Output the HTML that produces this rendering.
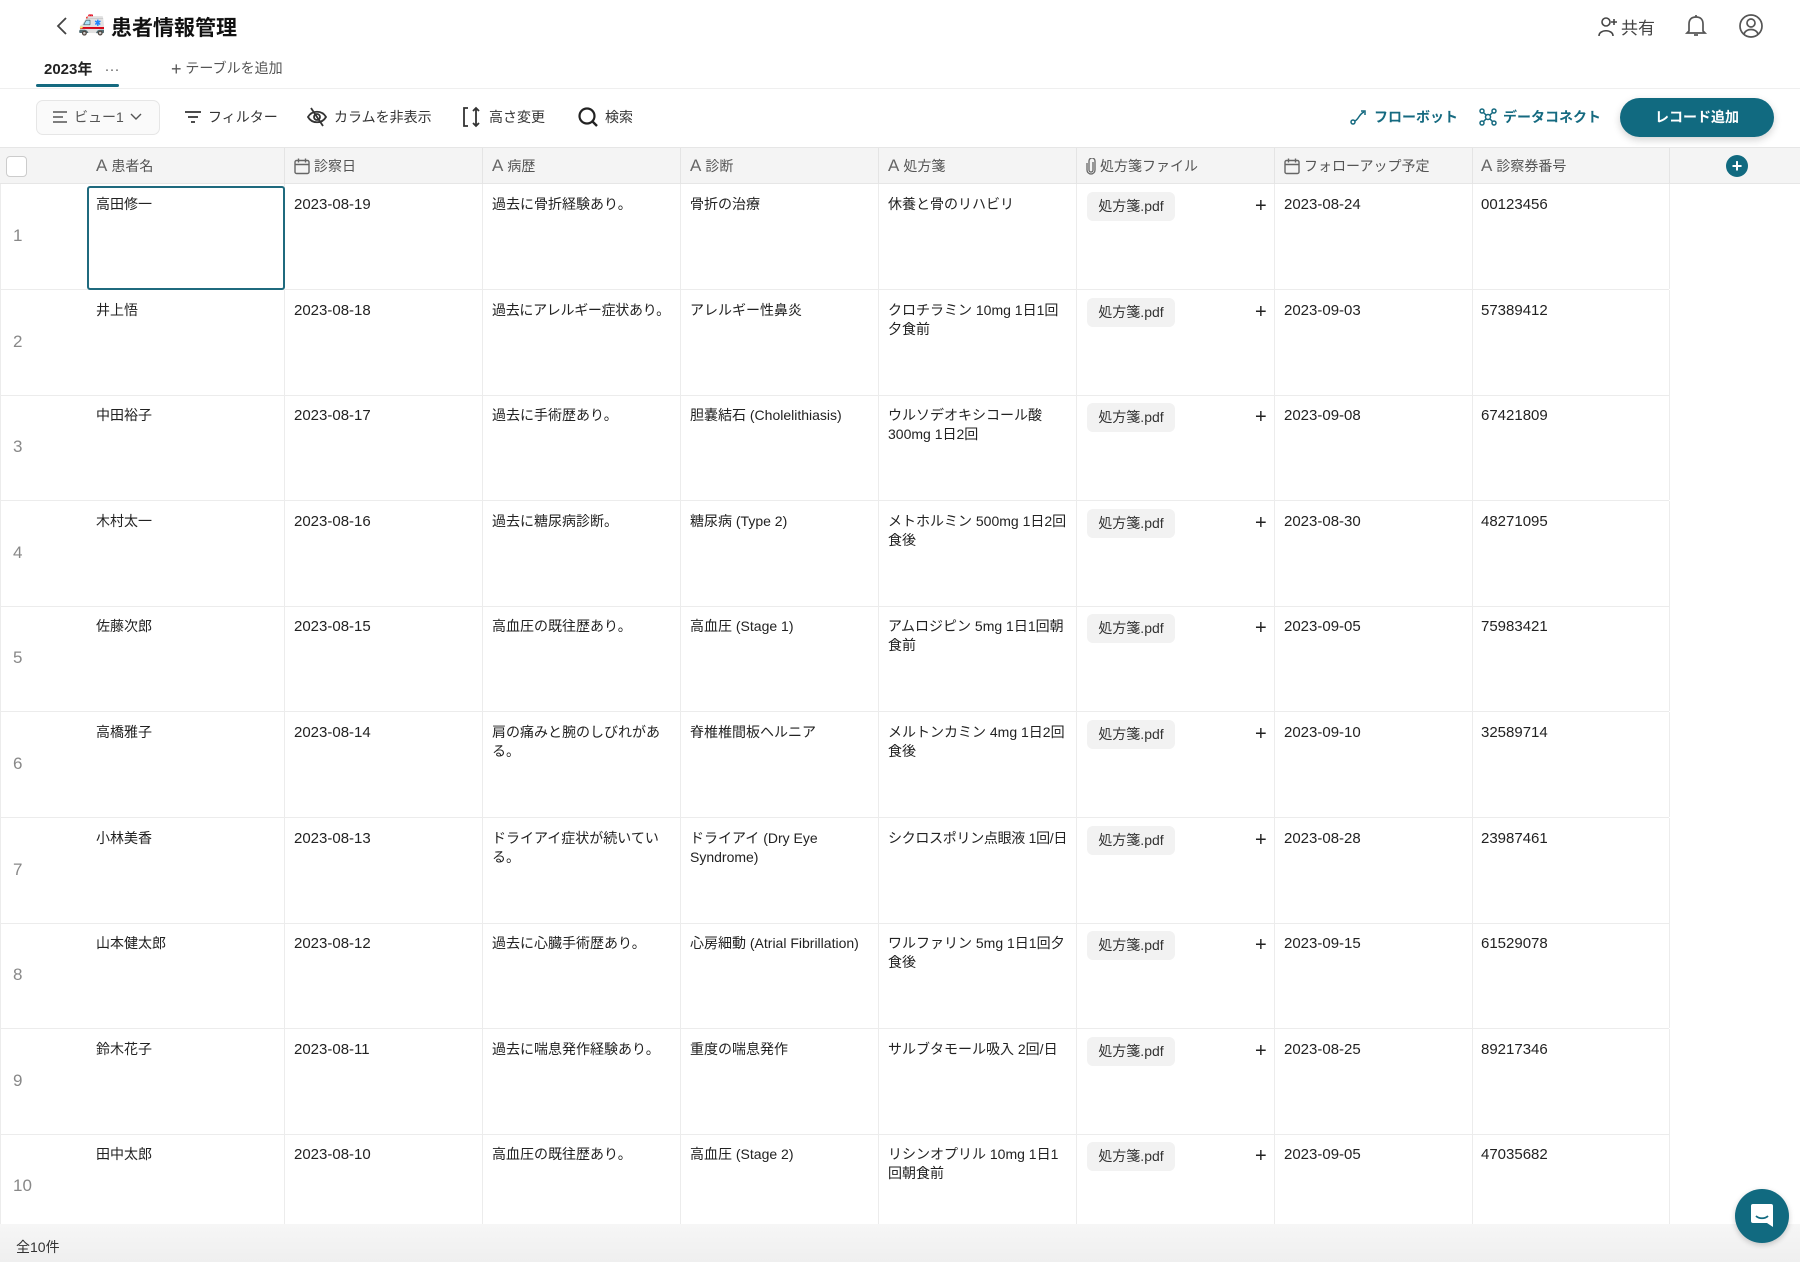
<!DOCTYPE html>
<html><head><meta charset="utf-8">
<style>
*{box-sizing:border-box;margin:0;padding:0}
body{width:1800px;height:1262px;overflow:hidden;background:#fff;font-family:"Liberation Sans","Noto Sans CJK JP",sans-serif;color:#222;position:relative}
.abs{position:absolute}
.hdr{position:absolute;top:147px;left:0;width:1800px;height:37px;background:#f4f4f4;border-top:1px solid #e6e6e6;border-bottom:1px solid #e6e6e6}
.hc{position:absolute;top:0;height:36px;line-height:36px;font-size:14px;color:#555;border-right:1px solid #e4e4e4;padding-left:9px;width:198px;display:flex;align-items:center;gap:4px}
.row{position:absolute;left:0;width:1669px;height:106px;border-bottom:1px solid #ececec}
.cell{position:absolute;top:0;height:105px;width:198px;border-right:1px solid #ececec;padding:11px 9px 0 9px;font-size:14px;line-height:19px;color:#222;white-space:nowrap;overflow:visible}
.num{position:absolute;left:13px;top:42px;font-size:17px;color:#888}
.c1{left:87px}.c2{left:285px}.c3{left:483px}.c4{left:681px}.c5{left:879px}.c6{left:1077px}.c7{left:1275px}.c8{left:1472px}
.d{font-size:15px}
.pill{position:absolute;left:10px;top:8px;width:88px;height:29px;background:#f2f2f2;border-radius:6px;font-size:14px;line-height:29px;text-align:center;color:#333}
.plus{position:absolute;left:178px;top:13px;font-size:20px;color:#222}
.tb{position:absolute;top:117px;transform:translateY(-50%);font-size:14px;color:#333;display:flex;align-items:center;gap:6px}
</style></head><body>

<svg class="abs" style="left:55px;top:16px" width="14" height="20" viewBox="0 0 14 20"><path d="M11 2 L3 10 L11 18" fill="none" stroke="#444" stroke-width="1.8"/></svg>
<div class="abs" style="left:78px;top:11px;font-size:22px">🚑</div>
<div class="abs" style="left:111px;top:12px;font-size:21px;font-weight:bold;color:#111">患者情報管理</div>

<div class="abs" style="left:1598px;top:14px;display:flex;align-items:center;gap:3px;font-size:17px;color:#444">
<svg width="20" height="22" viewBox="0 0 20 22"><circle cx="8" cy="6" r="4" fill="none" stroke="#444" stroke-width="1.6"/><path d="M1 20 C1 13 15 13 15 20" fill="none" stroke="#444" stroke-width="1.6"/><path d="M16 3v6M13 6h6" stroke="#444" stroke-width="1.6"/></svg>共有</div>
<svg class="abs" style="left:1684px;top:13px" width="24" height="26" viewBox="0 0 24 26"><path d="M5 18 V11 C5 6 8 4 12 4 C16 4 19 6 19 11 V18 L21 20 H3 Z" fill="none" stroke="#555" stroke-width="1.7"/><path d="M10 22 h4" stroke="#555" stroke-width="1.7"/><path d="M12 2v2" stroke="#555" stroke-width="1.7"/></svg>
<svg class="abs" style="left:1738px;top:13px" width="26" height="26" viewBox="0 0 26 26"><circle cx="13" cy="13" r="11" fill="none" stroke="#555" stroke-width="1.7"/><circle cx="13" cy="10" r="4" fill="none" stroke="#555" stroke-width="1.7"/><path d="M6 21 C8 15 18 15 20 21" fill="none" stroke="#555" stroke-width="1.7"/></svg>

<div class="abs" style="left:44px;top:58px;font-size:15px;font-weight:bold;color:#222">2023年 <span style="font-weight:normal;color:#666;margin-left:8px">···</span></div>
<div class="abs" style="left:36px;top:84px;width:83px;height:3px;background:#156a80;border-radius:2px"></div>
<div class="abs" style="left:171px;top:58px;font-size:14px;color:#555"><span style="font-size:18px;vertical-align:-2px">+</span> テーブルを追加</div>
<div class="abs" style="left:0;top:88px;width:1800px;height:1px;background:#efefef"></div>

<div class="abs" style="left:36px;top:100px;width:124px;height:35px;border:1px solid #e6e6e6;border-radius:7px;background:#fafafa"></div>
<div class="tb" style="left:52px;color:#555"><svg width="16" height="14"><path d="M1 2h14M1 7h10M1 12h14" stroke="#555" stroke-width="1.6"/></svg>ビュー1 <svg width="12" height="8"><path d="M1 1 L6 6 L11 1" fill="none" stroke="#555" stroke-width="1.4"/></svg></div>
<div class="tb" style="left:184px"><svg width="18" height="14"><path d="M1 2h16M4 7h10M7 12h4" stroke="#333" stroke-width="1.8"/></svg>フィルター</div>
<div class="tb" style="left:306px"><svg width="22" height="20" viewBox="0 0 22 20"><path d="M2 10 C6 3 16 3 20 10 C16 17 6 17 2 10Z" fill="none" stroke="#333" stroke-width="1.8"/><circle cx="11" cy="10" r="3" fill="none" stroke="#333" stroke-width="1.8"/><path d="M5 1 L17 19" stroke="#333" stroke-width="1.8"/></svg>カラムを非表示</div>
<div class="tb" style="left:461px"><svg width="22" height="22" viewBox="0 0 22 22"><path d="M7 2H3V20H7" fill="none" stroke="#333" stroke-width="1.8"/><path d="M15 2V20M12 5 L15 2 L18 5M12 17 L15 20 L18 17" fill="none" stroke="#333" stroke-width="1.8"/></svg>高さ変更</div>
<div class="tb" style="left:577px"><svg width="22" height="22" viewBox="0 0 22 22"><circle cx="10" cy="10" r="7.5" fill="none" stroke="#222" stroke-width="2.2"/><path d="M15.5 15.5 L20 20" stroke="#222" stroke-width="2.4"/></svg>検索</div>

<div class="tb" style="left:1350px;color:#156a80;font-weight:bold"><svg width="18" height="16" viewBox="0 0 18 16"><circle cx="3" cy="13" r="2" fill="none" stroke="#156a80" stroke-width="1.5"/><path d="M5 12 C9 10 9 5 14 3" fill="none" stroke="#156a80" stroke-width="1.5"/><path d="M11 2h4v4" fill="none" stroke="#156a80" stroke-width="1.5"/></svg>フローボット</div>
<div class="tb" style="left:1479px;color:#156a80;font-weight:bold"><svg width="18" height="18" viewBox="0 0 18 18"><circle cx="9" cy="9" r="2.5" fill="none" stroke="#156a80" stroke-width="1.5"/><circle cx="3" cy="3" r="2" fill="none" stroke="#156a80" stroke-width="1.5"/><circle cx="15" cy="3" r="2" fill="none" stroke="#156a80" stroke-width="1.5"/><circle cx="3" cy="15" r="2" fill="none" stroke="#156a80" stroke-width="1.5"/><circle cx="15" cy="15" r="2" fill="none" stroke="#156a80" stroke-width="1.5"/><path d="M4.5 4.5L7 7M13.5 4.5L11 7M4.5 13.5L7 11M13.5 13.5L11 11" stroke="#156a80" stroke-width="1.5"/></svg>データコネクト</div>
<div class="abs" style="left:1620px;top:98px;width:154px;height:39px;border-radius:20px;background:#116a80;color:#fff;font-size:14px;font-weight:bold;text-align:center;line-height:39px;box-shadow:0 3px 8px rgba(0,0,0,.18)">レコード追加</div>

<div class="hdr">
<div class="abs" style="left:6px;top:8px;width:21px;height:21px;border:1px solid #ccc;border-radius:4px;background:#fff"></div>
<div class="hc c1"><b style="font-weight:normal;font-size:17px;color:#666">A</b>患者名</div>
<div class="hc c2"><svg width="16" height="17" viewBox="0 0 16 17"><rect x="1" y="2.5" width="14" height="13" rx="1.5" fill="none" stroke="#666" stroke-width="1.4"/><path d="M1 6.5h14M4.5 0.5v4M11.5 0.5v4" stroke="#666" stroke-width="1.4"/></svg>診察日</div>
<div class="hc c3"><b style="font-weight:normal;font-size:17px;color:#666">A</b>病歴</div>
<div class="hc c4"><b style="font-weight:normal;font-size:17px;color:#666">A</b>診断</div>
<div class="hc c5"><b style="font-weight:normal;font-size:17px;color:#666">A</b>処方箋</div>
<div class="hc c6"><svg width="10" height="17" viewBox="0 0 10 17"><path d="M7 4v8a2 2 0 0 1-4 0V3a3 3 0 0 1 6 0v9a4 4 0 0 1-8 0V5" fill="none" stroke="#666" stroke-width="1.3"/></svg>処方箋ファイル</div>
<div class="hc c7"><svg width="16" height="17" viewBox="0 0 16 17"><rect x="1" y="2.5" width="14" height="13" rx="1.5" fill="none" stroke="#666" stroke-width="1.4"/><path d="M1 6.5h14M4.5 0.5v4M11.5 0.5v4" stroke="#666" stroke-width="1.4"/></svg>フォローアップ予定</div>
<div class="hc c8"><b style="font-weight:normal;font-size:17px;color:#666">A</b>診察券番号</div>
<div class="abs" style="left:1726px;top:7px;width:22px;height:22px;border-radius:50%;background:#116a80;color:#fff;text-align:center;line-height:22px;font-size:18px;font-weight:bold">+</div>
</div>

<div class="row" style="top:184px"><div class="num">1</div>
<div class="cell c1">高田修一</div><div class="cell c2 d">2023-08-19</div><div class="cell c3">過去に骨折経験あり。</div><div class="cell c4">骨折の治療</div><div class="cell c5">休養と骨のリハビリ</div><div class="cell c6"><div class="pill">処方箋.pdf</div><div class="plus">+</div></div><div class="cell c7 d">2023-08-24</div><div class="cell c8 d">00123456</div></div>
<div class="row" style="top:290px"><div class="num">2</div>
<div class="cell c1">井上悟</div><div class="cell c2 d">2023-08-18</div><div class="cell c3" style="letter-spacing:-0.3px">過去にアレルギー症状あり。</div><div class="cell c4">アレルギー性鼻炎</div><div class="cell c5">クロチラミン 10mg 1日1回<br>夕食前</div><div class="cell c6"><div class="pill">処方箋.pdf</div><div class="plus">+</div></div><div class="cell c7 d">2023-09-03</div><div class="cell c8 d">57389412</div></div>
<div class="row" style="top:395px"><div class="num">3</div>
<div class="cell c1">中田裕子</div><div class="cell c2 d">2023-08-17</div><div class="cell c3">過去に手術歴あり。</div><div class="cell c4">胆嚢結石 (Cholelithiasis)</div><div class="cell c5">ウルソデオキシコール酸<br>300mg 1日2回</div><div class="cell c6"><div class="pill">処方箋.pdf</div><div class="plus">+</div></div><div class="cell c7 d">2023-09-08</div><div class="cell c8 d">67421809</div></div>
<div class="row" style="top:501px"><div class="num">4</div>
<div class="cell c1">木村太一</div><div class="cell c2 d">2023-08-16</div><div class="cell c3">過去に糖尿病診断。</div><div class="cell c4">糖尿病 (Type 2)</div><div class="cell c5">メトホルミン 500mg 1日2回<br>食後</div><div class="cell c6"><div class="pill">処方箋.pdf</div><div class="plus">+</div></div><div class="cell c7 d">2023-08-30</div><div class="cell c8 d">48271095</div></div>
<div class="row" style="top:606px"><div class="num">5</div>
<div class="cell c1">佐藤次郎</div><div class="cell c2 d">2023-08-15</div><div class="cell c3">高血圧の既往歴あり。</div><div class="cell c4">高血圧 (Stage 1)</div><div class="cell c5">アムロジピン 5mg 1日1回朝<br>食前</div><div class="cell c6"><div class="pill">処方箋.pdf</div><div class="plus">+</div></div><div class="cell c7 d">2023-09-05</div><div class="cell c8 d">75983421</div></div>
<div class="row" style="top:712px"><div class="num">6</div>
<div class="cell c1">高橋雅子</div><div class="cell c2 d">2023-08-14</div><div class="cell c3">肩の痛みと腕のしびれがあ<br>る。</div><div class="cell c4">脊椎椎間板ヘルニア</div><div class="cell c5">メルトンカミン 4mg 1日2回<br>食後</div><div class="cell c6"><div class="pill">処方箋.pdf</div><div class="plus">+</div></div><div class="cell c7 d">2023-09-10</div><div class="cell c8 d">32589714</div></div>
<div class="row" style="top:818px"><div class="num">7</div>
<div class="cell c1">小林美香</div><div class="cell c2 d">2023-08-13</div><div class="cell c3">ドライアイ症状が続いてい<br>る。</div><div class="cell c4">ドライアイ (Dry Eye<br>Syndrome)</div><div class="cell c5" style="letter-spacing:-0.3px">シクロスポリン点眼液 1回/日</div><div class="cell c6"><div class="pill">処方箋.pdf</div><div class="plus">+</div></div><div class="cell c7 d">2023-08-28</div><div class="cell c8 d">23987461</div></div>
<div class="row" style="top:923px"><div class="num">8</div>
<div class="cell c1">山本健太郎</div><div class="cell c2 d">2023-08-12</div><div class="cell c3">過去に心臓手術歴あり。</div><div class="cell c4">心房細動 (Atrial Fibrillation)</div><div class="cell c5">ワルファリン 5mg 1日1回夕<br>食後</div><div class="cell c6"><div class="pill">処方箋.pdf</div><div class="plus">+</div></div><div class="cell c7 d">2023-09-15</div><div class="cell c8 d">61529078</div></div>
<div class="row" style="top:1029px"><div class="num">9</div>
<div class="cell c1">鈴木花子</div><div class="cell c2 d">2023-08-11</div><div class="cell c3">過去に喘息発作経験あり。</div><div class="cell c4">重度の喘息発作</div><div class="cell c5">サルブタモール吸入 2回/日</div><div class="cell c6"><div class="pill">処方箋.pdf</div><div class="plus">+</div></div><div class="cell c7 d">2023-08-25</div><div class="cell c8 d">89217346</div></div>
<div class="row" style="top:1134px"><div class="num">10</div>
<div class="cell c1">田中太郎</div><div class="cell c2 d">2023-08-10</div><div class="cell c3">高血圧の既往歴あり。</div><div class="cell c4">高血圧 (Stage 2)</div><div class="cell c5">リシンオプリル 10mg 1日1<br>回朝食前</div><div class="cell c6"><div class="pill">処方箋.pdf</div><div class="plus">+</div></div><div class="cell c7 d">2023-09-05</div><div class="cell c8 d">47035682</div></div>

<div class="abs" style="left:87px;top:186px;width:198px;height:104px;border:2px solid #1f6a7e;border-radius:3px"></div>
<div class="abs" style="left:0;top:184px;width:1px;height:1040px;background:#ececec"></div>

<div class="abs" style="left:0;top:1224px;width:1800px;height:38px;background:linear-gradient(#f6f6f6,#efefef)"></div>
<div class="abs" style="left:16px;top:1237px;font-size:14px;color:#333">全10件</div>

<div class="abs" style="left:1735px;top:1189px;width:54px;height:54px;border-radius:50%;background:#116a80;box-shadow:0 2px 6px rgba(0,0,0,.2)"></div>
<svg class="abs" style="left:1750px;top:1203px" width="24" height="26" viewBox="0 0 24 26"><path d="M3 1H21a2 2 0 0 1 2 2V24L17 20H3a2 2 0 0 1-2-2V3a2 2 0 0 1 2-2Z" fill="#fff"/><path d="M6 13 C9 16 15 16 18 13" fill="none" stroke="#116a80" stroke-width="1.8"/></svg>
</body></html>
